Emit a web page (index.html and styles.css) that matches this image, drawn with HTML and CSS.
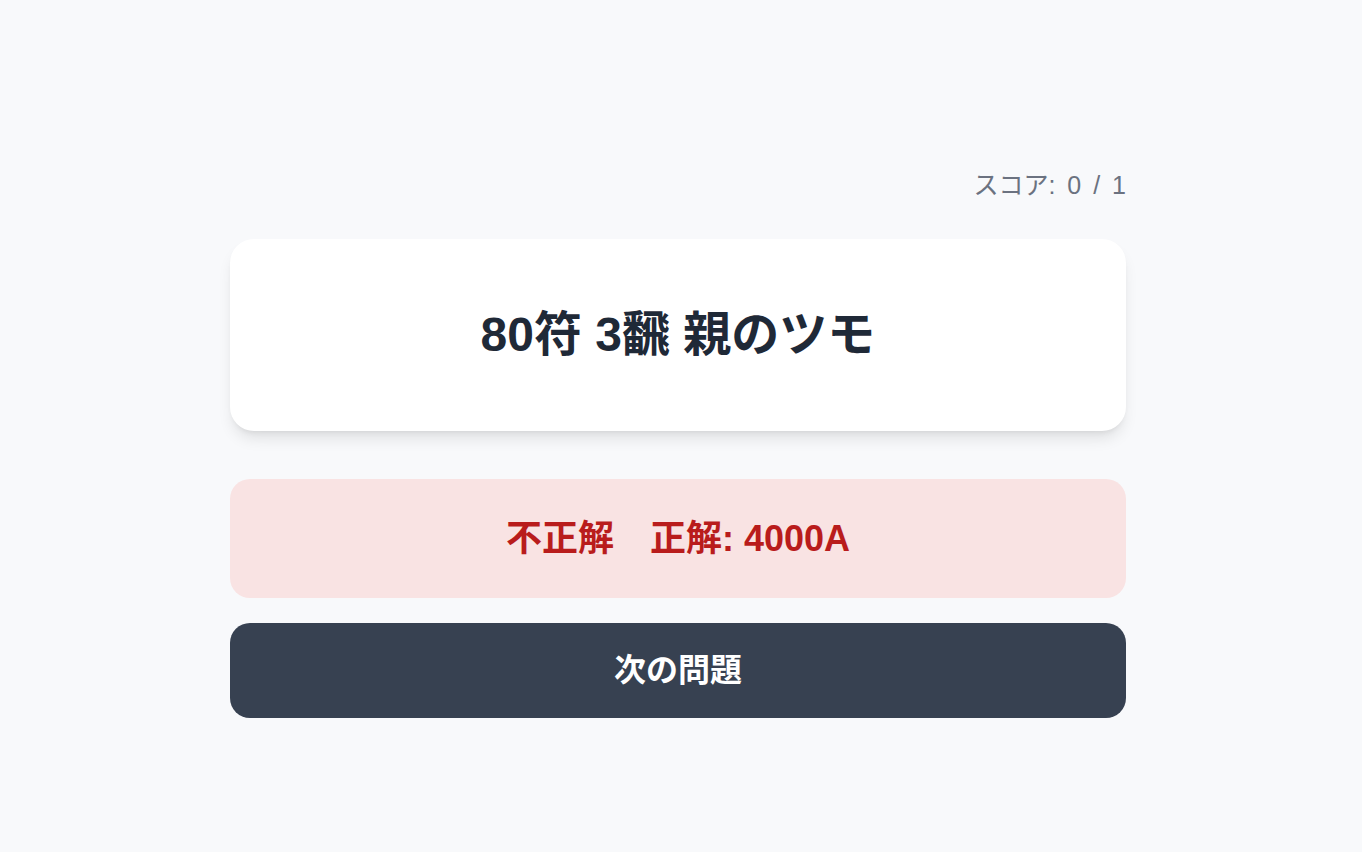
FILE: index.html
```html
<!DOCTYPE html>
<html lang="ja">
<head>
    <meta charset="UTF-8">
    <meta name="viewport" content="width=device-width, initial-scale=1.0">
    <title>点数計算クイズ</title>
    <link rel="stylesheet" href="styles.css">
</head>
<body>
    <main class="quiz">
        <div class="score">スコア: 0 / 1</div>
        <div class="question-card">
            <h1 class="question">80符 3飜 親のツモ</h1>
        </div>
        <div class="result wrong">不正解　正解: 4000A</div>
        <button class="next-btn" type="button">次の問題</button>
    </main>
</body>
</html>
```

FILE: styles.css
```css
* {
    box-sizing: border-box;
}

body {
    margin: 0;
    padding: 169px 6px 0 0;
    min-height: 852px;
    background-color: #f8f9fb;
    font-family: "Liberation Sans", "Noto Sans CJK JP", sans-serif;
    color: #1f2937;
}

.quiz {
    width: 896px;
    margin: 0 auto;
    display: flex;
    flex-direction: column;
}

.score {
    text-align: right;
    font-size: 25px;
    line-height: 33px;
    word-spacing: 5px;
    color: #6b7280;
    margin-bottom: 37px;
}

.question-card {
    background-color: #fff;
    border-radius: 24px;
    padding: 64px 32px;
    text-align: center;
    box-shadow: 0 10px 15px -3px rgba(0, 0, 0, 0.1), 0 4px 6px -4px rgba(0, 0, 0, 0.1);
    margin-bottom: 48px;
}

.question {
    margin: 0;
    font-size: 48px;
    line-height: 64px;
    font-weight: 700;
    color: #1f2937;
}

.result {
    border-radius: 20px;
    padding: 40px 32px;
    text-align: center;
    font-size: 36px;
    line-height: 39px;
    font-weight: 700;
    margin-bottom: 25px;
}

.wrong {
    background-color: #f9e3e3;
    color: #b91c1c;
}

.next-btn {
    border: none;
    border-radius: 20px;
    background-color: #374151;
    color: #fff;
    font-family: inherit;
    font-size: 32px;
    line-height: 39px;
    font-weight: 700;
    padding: 28px 32px;
    cursor: pointer;
}
```
